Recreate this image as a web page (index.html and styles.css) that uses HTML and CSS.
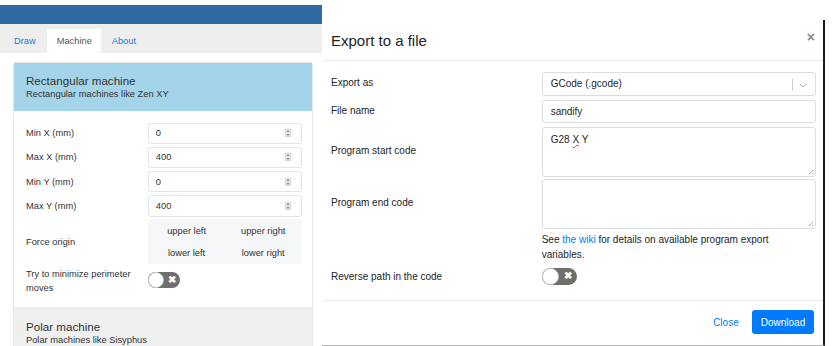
FILE: index.html
```html
<!DOCTYPE html>
<html>
<head>
  <title>Sandify</title>
  <link rel="stylesheet" href="styles.css">
</head>
<body>
  <div class="page">
    <div class="side">
      <div class="topbar"></div>
      <div class="tabs">
        <span class="tab">Draw</span>
        <span class="tab active">Machine</span>
        <span class="tab">About</span>
      </div>

      <div class="card">
        <div class="card-header">
          <div class="card-title">Rectangular machine</div>
          <div class="card-sub">Rectangular machines like Zen XY</div>
        </div>
        <div class="card-body">
          <div class="field">
            <span class="field-label">Min X (mm)</span>
            <div class="num-input"><span>0</span><span class="spin"></span></div>
          </div>
          <div class="field">
            <span class="field-label">Max X (mm)</span>
            <div class="num-input"><span>400</span><span class="spin"></span></div>
          </div>
          <div class="field">
            <span class="field-label">Min Y (mm)</span>
            <div class="num-input"><span>0</span><span class="spin"></span></div>
          </div>
          <div class="field">
            <span class="field-label">Max Y (mm)</span>
            <div class="num-input"><span>400</span><span class="spin"></span></div>
          </div>
          <div class="field">
            <span class="field-label">Force origin</span>
            <div class="origin-grid">
              <span>upper left</span>
              <span>upper right</span>
              <span>lower left</span>
              <span>lower right</span>
            </div>
          </div>
          <div class="field field-top">
            <span class="field-label wrap">Try to minimize perimeter moves</span>
            <span class="toggle small"><span class="knob"></span><span class="cross">&#10006;</span></span>
          </div>
        </div>
        <div class="card-footer">
          <div class="card-title">Polar machine</div>
          <div class="card-sub">Polar machines like Sisyphus</div>
        </div>
      </div>
    </div>

    <div class="modal-wrap">
      <div class="modal">
        <div class="modal-header">
          <span class="modal-title">Export to a file</span>
          <span class="modal-close">&#215;</span>
        </div>
        <div class="modal-body">
          <div class="row row-select">
            <span class="row-label">Export as</span>
            <div class="select">
              <span>GCode (.gcode)</span>
              <span class="select-sep"></span>
              <svg class="chevron" width="8" height="5" viewBox="0 0 8 5"><path d="M0.7 0.7 L4 4 L7.3 0.7" fill="none" stroke="#aaa" stroke-width="1"/></svg>
            </div>
          </div>
          <div class="row row-file">
            <span class="row-label">File name</span>
            <div class="text-input">sandify</div>
          </div>
          <div class="row row-start">
            <span class="row-label">Program start code</span>
            <div class="textarea">G28 <span class="typo">X</span> Y<span class="grip"></span></div>
          </div>
          <div class="row row-end">
            <span class="row-label">Program end code</span>
            <div class="textarea tall"><span class="grip"></span></div>
          </div>
          <div class="row row-help">
            <span></span>
            <p class="help">See <a href="#">the wiki</a> for details on available program export variables.</p>
          </div>
          <div class="row row-toggle">
            <span class="row-label plain">Reverse path in the code</span>
            <span class="toggle"><span class="knob"></span><span class="cross">&#10006;</span></span>
          </div>
        </div>
        <div class="modal-footer">
          <a href="#" class="btn-link">Close</a>
          <span class="btn-primary">Download</span>
        </div>
      </div>
    </div>
  </div>
</body>
</html>
```

FILE: styles.css
```css
:root {
  --link-color: #007bff;
  --text-color: #333;
  --border-color: #dcdfe3;
}

body {
  margin: 0;
  background: white;
  font-family: 'Liberation Sans', Arial, sans-serif;
  color: var(--text-color);
}

.page {
  display: flex;
  width: 835px;
  height: 346px;
  overflow: hidden;
}

/* left: machine settings */
.side {
  width: 322px;
  flex-shrink: 0;
  font-size: 9.3px;
}

.topbar {
  margin-top: 5px;
  height: 19px;
  background: #2f6ba2;
}

.tabs {
  display: flex;
  align-items: flex-end;
  height: 29px;
  padding-left: 3px;
  background: #eeeeee;
}

.tab {
  display: flex;
  align-items: center;
  height: 24px;
  padding: 0 11px;
  color: #1b7be6;
}

.tab.active {
  background: white;
  color: #555;
  padding: 0 10px;
  width: 34px;
}

.card {
  margin: 9px 0 0 13px;
  width: 298px;
  border: 1px solid #e3e6ea;
  border-radius: 3px;
}

.card-header {
  height: 48px;
  box-sizing: border-box;
  padding: 11px 12px 0;
  background: #a4d4ea;
}

.card-title {
  font-size: 11.6px;
  line-height: 14px;
}

.card-sub {
  font-size: 9.3px;
  line-height: 13px;
}

.card-body {
  padding: 11.5px 10.5px 12.4px 12px;
}

.field {
  display: flex;
  align-items: center;
  margin-bottom: 2.7px;
}

.field-top {
  align-items: flex-start;
  margin-top: 4px;
  margin-bottom: 0;
}

.field-label {
  width: 122.3px;
  flex-shrink: 0;
}

.field-label.wrap {
  width: 112px;
  margin-right: 10.3px;
  line-height: 13.3px;
}

.num-input {
  display: flex;
  align-items: center;
  justify-content: space-between;
  width: 153.4px;
  height: 21.5px;
  box-sizing: border-box;
  padding: 0 10px 0 6.5px;
  border: 1px solid #e1e4e8;
  border-radius: 3px;
}

.spin {
  position: relative;
  width: 6px;
  height: 8px;
  background: #e6e6e6;
  border: 1px solid #d6d6d6;
  box-sizing: border-box;
}

.spin:before,
.spin:after {
  content: "";
  position: absolute;
  left: 1px;
  border-left: 1.5px solid transparent;
  border-right: 1.5px solid transparent;
}

.spin:before {
  top: 0;
  border-bottom: 2px solid #666;
}

.spin:after {
  bottom: 0;
  border-top: 2px solid #666;
}

.origin-grid {
  display: grid;
  grid-template-columns: 1fr 1fr;
  grid-auto-rows: 22.5px;
  width: 153.4px;
  background: #f6f7f9;
}

.origin-grid span {
  display: flex;
  align-items: center;
  justify-content: center;
}

.card-footer {
  height: 60px;
  box-sizing: border-box;
  padding: 13px 12px 0;
  background: #efefef;
}

/* toggle switch */
.toggle {
  position: relative;
  display: inline-flex;
  align-items: center;
  justify-content: flex-end;
  width: 35px;
  height: 17px;
  box-sizing: border-box;
  padding-right: 5px;
  background: #6f6f6f;
  border-radius: 9px;
}

.toggle.small {
  width: 32px;
  height: 16px;
  margin-top: 4px;
  padding-right: 4px;
}

.knob {
  position: absolute;
  left: 0;
  top: 0;
  width: 17px;
  height: 17px;
  box-sizing: border-box;
  background: white;
  border: 1px solid #c8c8c8;
  border-radius: 50%;
}

.toggle.small .knob {
  width: 16px;
  height: 16px;
}

.cross {
  color: white;
  font-size: 10px;
  font-weight: bold;
  line-height: 1;
}

/* right: export modal */
.modal-wrap {
  flex: 1;
  padding-top: 20px;
}

.modal {
  width: 503px;
  height: 326px;
  box-sizing: border-box;
  border-right: 2px solid #1b1b1b;
  border-bottom: 1px solid #b5b5b5;
  font-size: 10px;
  color: #212529;
}

.modal-header {
  display: flex;
  justify-content: space-between;
  align-items: flex-start;
  height: 41px;
  box-sizing: border-box;
  margin-left: 1px;
  padding: 12px 8px 0 8px;
  border-bottom: 1px solid #e9ecef;
}

.modal-title {
  font-size: 15px;
  line-height: 18px;
}

.modal-close {
  margin-top: -3px;
  font-size: 14px;
  font-weight: bold;
  color: #8a8a8a;
}

.modal-body {
  padding: 10.7px 8.3px 15px 9px;
}

.row {
  display: grid;
  grid-template-columns: 210.7px 274px;
  align-items: center;
}

.row-label {
  padding-bottom: 2px;
}

.row-label.plain {
  padding-bottom: 0;
}

.row-select { margin-bottom: 4.3px; }
.row-file { margin-bottom: 4.3px; }
.row-start { margin-bottom: 2.3px; }

.select,
.text-input,
.textarea {
  position: relative;
  box-sizing: border-box;
  border: 1px solid #dadde1;
  border-radius: 3px;
  padding-left: 8px;
}

.select {
  display: flex;
  align-items: center;
  height: 24px;
}

.select-sep {
  position: absolute;
  right: 22px;
  top: 6px;
  width: 1px;
  height: 12px;
  background: #ccc;
}

.chevron {
  position: absolute;
  right: 8px;
  top: 10px;
}

.text-input {
  display: flex;
  align-items: center;
  height: 23px;
}

.textarea {
  height: 49.4px;
  padding-top: 5px;
  line-height: 13px;
}

.textarea.tall {
  height: 50px;
}

.typo {
  text-decoration: underline wavy #d22;
  text-decoration-thickness: 1px;
}

.grip {
  position: absolute;
  right: 2px;
  bottom: 2px;
  width: 5px;
  height: 5px;
  background: linear-gradient(135deg, transparent 55%, #aaa 55%, #aaa 65%, transparent 65%, transparent 80%, #aaa 80%);
}

.help {
  max-width: 236px;
  margin: 3px 0 0;
  line-height: 15.4px;
}

.help a {
  color: var(--link-color);
  text-decoration: none;
}

.row-toggle {
  margin-top: 5px;
}

.modal-footer {
  display: flex;
  justify-content: flex-end;
  align-items: center;
  gap: 13.6px;
  height: 44px;
  box-sizing: border-box;
  margin-left: 1px;
  padding: 0 9.3px 0 0;
  border-top: 1px solid #e9ecef;
}

.btn-link {
  color: var(--link-color);
  text-decoration: none;
}

.btn-primary {
  display: flex;
  align-items: center;
  justify-content: center;
  width: 61.4px;
  height: 23.6px;
  background: var(--link-color);
  color: white;
  border-radius: 3px;
}
```
